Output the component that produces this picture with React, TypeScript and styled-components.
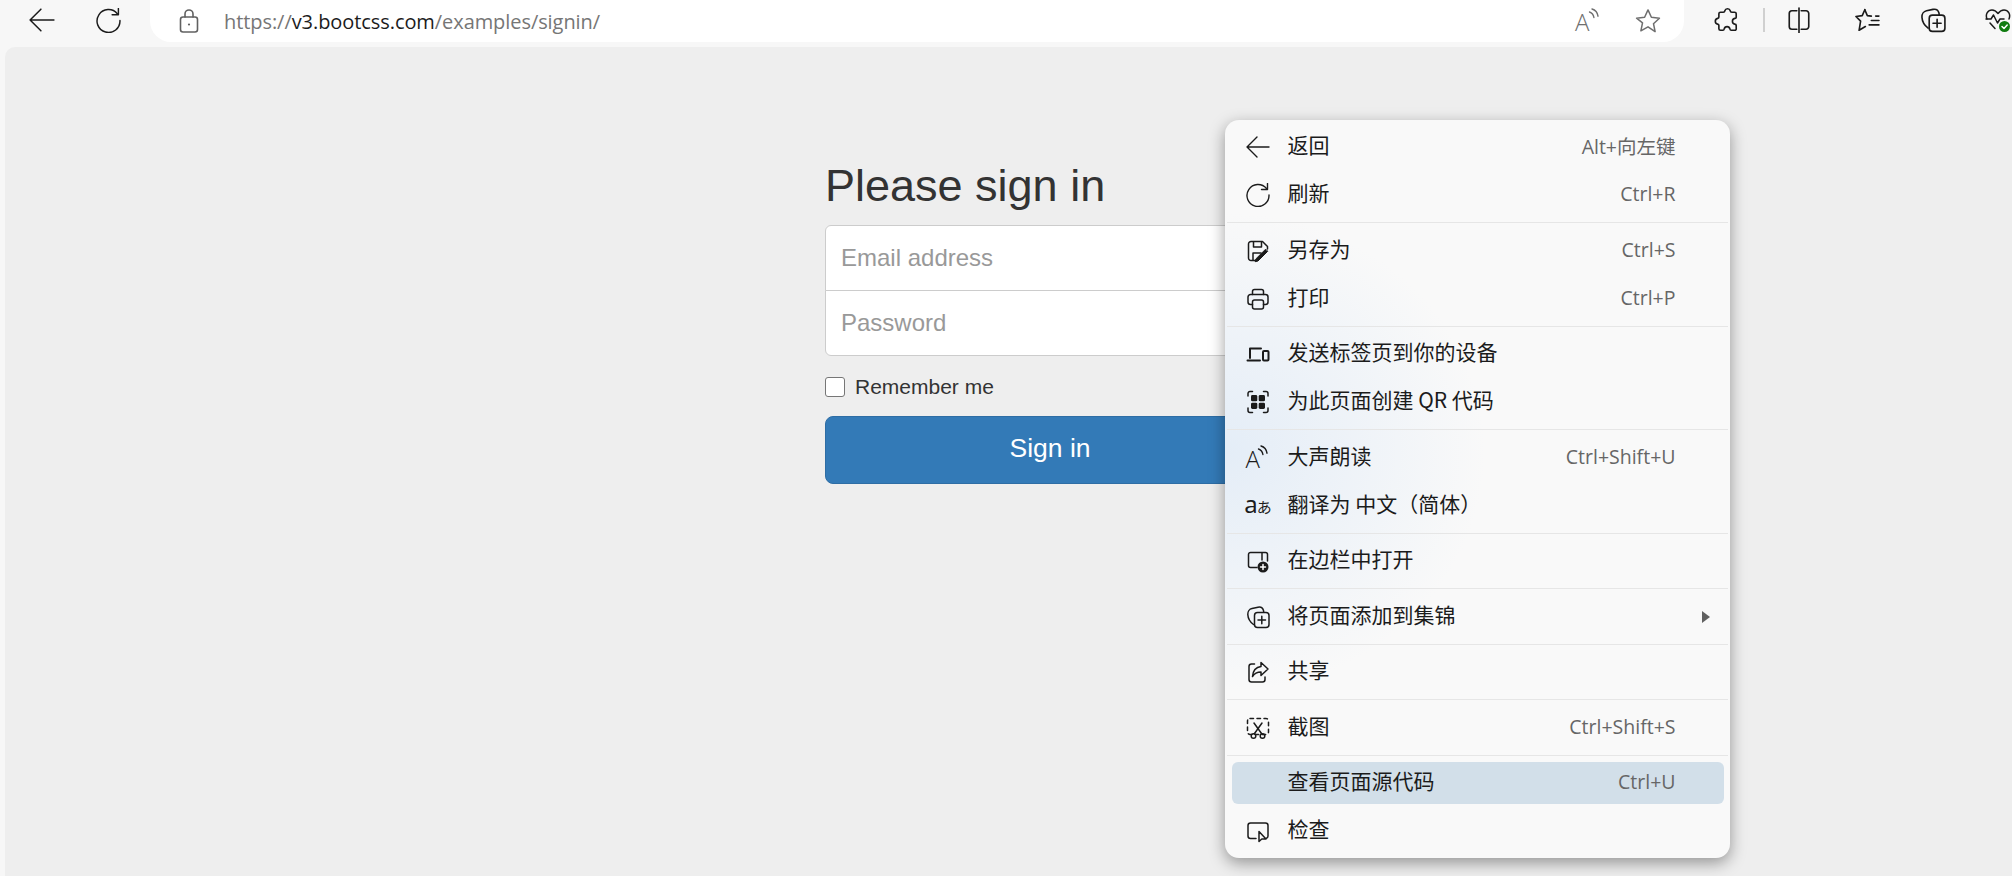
import { FC, ReactNode } from "react";
import styled, { createGlobalStyle } from "styled-components";

const GlobalStyle = createGlobalStyle`
  html, body {
    margin: 0;
    padding: 0;
    height: 876px;
    overflow: hidden;
    background: #f7f7f7;
  }
  * {
    box-sizing: border-box;
  }
`;

const Page = styled.div`
  position: relative;
  display: flex;
  flex-direction: column;
  width: 2012px;
  height: 876px;
  overflow: hidden;
  background: #f7f7f7;
`;

const Toolbar = styled.div`
  display: flex;
  align-items: flex-start;
  height: 47px;
  flex: none;
`;

const NavButton = styled.div<{ $width: number; $left?: number }>`
  display: flex;
  align-items: center;
  justify-content: center;
  flex: none;
  width: ${(p) => p.$width}px;
  height: 40px;
  margin-left: ${(p) => p.$left ?? 0}px;
`;

const AddressBar = styled.div`
  display: flex;
  align-items: center;
  flex: none;
  width: 1534px;
  height: 42px;
  margin-left: 17px;
  padding: 0 22px 0 27px;
  background: #ffffff;
  border-radius: 0 0 21px 21px;
`;

const Url = styled.div`
  flex: 1;
  margin-left: 23px;
  font-family: "Open Sans", "Liberation Sans", sans-serif;
  font-size: 20px;
  letter-spacing: -0.07px;
  color: #767676;
`;

const UrlHost = styled.span`
  color: #1c1c1c;
`;

const BarIcons = styled.div`
  display: flex;
  align-items: center;
  gap: 33px;
`;

const ToolbarDivider = styled.div`
  flex: none;
  width: 2px;
  height: 24px;
  margin: 8px 0 0 23px;
  background: #d0d0d0;
`;

const Content = styled.main`
  flex: 1;
  margin-left: 5px;
  padding: 114px 0 0 820px;
  background: #eeeeee;
  border-radius: 10px 0 0 0;
`;

const SignInForm = styled.form`
  width: 450px;
  font-family: "Liberation Sans", Arial, sans-serif;
  color: #333333;
`;

const Heading = styled.h2`
  margin: 0 0 14px;
  font-size: 45px;
  font-weight: 500;
  line-height: 49.5px;
`;

const Field = styled.input<{ $position: "top" | "bottom" }>`
  display: block;
  width: 100%;
  height: 66px;
  padding: 0 15px;
  margin-top: ${(p) => (p.$position === "bottom" ? "-1px" : "0")};
  font-family: inherit;
  font-size: 24px;
  color: #555555;
  background: #ffffff;
  border: 1px solid #cccccc;
  border-radius: ${(p) => (p.$position === "top" ? "6px 6px 0 0" : "0 0 6px 6px")};
  outline: none;
  &::placeholder {
    color: #999999;
    opacity: 1;
  }
`;

const CheckRow = styled.label`
  display: flex;
  align-items: center;
  gap: 10px;
  height: 20px;
  margin: 21px 0 19px;
  font-size: 21px;
`;

const CheckBox = styled.span`
  flex: none;
  width: 20px;
  height: 20px;
  background: #ffffff;
  border: 1.5px solid #767676;
  border-radius: 3px;
`;

const SubmitButton = styled.button`
  display: block;
  width: 100%;
  height: 68px;
  padding: 0 0 2px;
  font-family: inherit;
  font-size: 26.5px;
  color: #ffffff;
  background: #337ab7;
  border: 1px solid #2e6da4;
  border-radius: 8px;
`;

const Menu = styled.div`
  position: absolute;
  top: 120px;
  left: 1225px;
  display: flex;
  flex-direction: column;
  width: 505px;
  height: 738px;
  padding: 3px 0 4px;
  font-family: "Noto Sans CJK SC", "Noto Sans", sans-serif;
  background:
    radial-gradient(ellipse 260px 240px at 0% 45%, #e4edf7 0%, rgba(228, 237, 247, 0) 100%),
    #f9f9f9;
  border-radius: 14px;
  box-shadow: 0 5px 16px rgba(0, 0, 0, 0.38);
`;

const MenuGroup = styled.div`
  display: flex;
  flex-direction: column;
  flex: none;
`;

const Row = styled.div<{ $active?: boolean }>`
  display: flex;
  align-items: center;
  flex: none;
  height: 42px;
  margin: 3px 6.5px;
  padding: 0 14px;
  background: ${(p) => (p.$active ? "#d2dfe9" : "transparent")};
  border-radius: 6px;
`;

const IconSlot = styled.span`
  display: flex;
  align-items: center;
  justify-content: center;
  flex: none;
  width: 24px;
  height: 24px;
  margin-right: 18px;
`;

const Label = styled.span`
  flex: 1;
  margin-bottom: 6px;
  font-size: 21px;
  font-weight: 400;
  line-height: 36px;
  color: #1b1b1b;
  white-space: pre;
`;

const Shortcut = styled.span`
  margin-right: 34px;
  padding-bottom: 3px;
  font-family: "Open Sans", "Noto Sans CJK SC", sans-serif;
  font-size: 19.5px;
  color: #666666;
`;

const Separator = styled.div`
  flex: none;
  height: 1px;
  margin: 3.25px 2px;
  background: #e6e6e6;
`;

const Svg: FC<{ size?: number; children: ReactNode; color?: string; sw?: number }> = ({
  size = 24,
  children,
  color = "#1b1b1b",
  sw = 1.5,
}) => (
  <svg
    width={size}
    height={size}
    viewBox="0 0 24 24"
    fill="none"
    stroke={color}
    strokeWidth={sw}
    strokeLinecap="round"
    strokeLinejoin="round"
  >
    {children}
  </svg>
);

const BackIcon = ({ size = 24 }: { size?: number }) => (
  <Svg size={size} sw={1.4}>
    <path d="M23 12H1M11 2 1 12l10 10" />
  </Svg>
);

const ReloadIcon = ({ size = 24 }: { size?: number }) => (
  <Svg size={size} sw={1.4}>
    <path d="M20.500 5.500A11 11 0 1 0 23 12" />
    <path d="M21.500 0.500v6h-6" />
  </Svg>
);

const LockIcon = () => (
  <Svg size={24} color="#616161" sw={1.6}>
    <rect x="3.500" y="8" width="17" height="15" rx="2.500" />
    <path d="M8 8V5a4 4 0 0 1 8 0v3" />
    <circle cx="12" cy="15.500" r="1.100" fill="#616161" stroke="none" />
  </Svg>
);

const ReadAloudBox = styled.span<{ $color: string }>`
  position: relative;
  display: block;
  width: 26px;
  height: 26px;
  font-family: "Open Sans", "Liberation Sans", sans-serif;
  font-size: 24px;
  font-weight: 300;
  line-height: 28px;
  color: ${(p) => p.$color};
`;

const ReadWaves = styled.svg`
  position: absolute;
  top: 0;
  right: 0;
`;

const ReadAloudIcon = ({ color = "#1b1b1b" }: { color?: string }) => (
  <ReadAloudBox $color={color}>
    A
    <ReadWaves width="14" height="14" viewBox="0 0 14 14" fill="none" stroke={color} strokeWidth="1.4" strokeLinecap="round">
      <path d="M2.500 4c2.500.8 4 2.800 4.400 5.500" />
      <path d="M5 1c3.500 1 5.500 3.800 6 7.200" />
    </ReadWaves>
  </ReadAloudBox>
);

const StarIcon = () => (
  <Svg size={28} color="#6f6f6f" sw={1.3}>
    <path d="M12 2.500l2.900 6.300 6.900.8-5.100 4.700 1.400 6.800L12 17l-6.100 3.400 1.400-6.800L2.200 9.600l6.900-.8z" />
  </Svg>
);

const ExtensionIcon = () => (
  <Svg size={26} sw={1.5}>
    <path d="M10 3.500a2.600 2.600 0 0 1 5 0c.1.900.600 1.300 1.500 1.300H19a1.500 1.500 0 0 1 1.500 1.500v3c0 .900-.500 1.300-1.300 1.200a2.700 2.700 0 0 0 0 5.300c.800 0 1.300.400 1.300 1.200v2.500A1.500 1.500 0 0 1 19 21.500h-3c-.900 0-1.200-.500-1.300-1.200a2.700 2.700 0 0 0-5.300 0c-.100.800-.500 1.200-1.200 1.200H6a1.500 1.500 0 0 1-1.500-1.500v-3c0-.700-.400-1.100-1.100-1.200a2.700 2.700 0 0 1 0-5.300c.700-.100 1.100-.500 1.100-1.200V6.300A1.500 1.500 0 0 1 6 4.800h2.500c.900 0 1.400-.400 1.500-1.300z" />
  </Svg>
);

const SplitIcon = () => (
  <Svg size={26} sw={1.5}>
    <path d="M10 3.500H5.500A2.500 2.500 0 0 0 3 6v12a2.500 2.500 0 0 0 2.500 2.500H10" />
    <path d="M14 3.500h4.500A2.500 2.500 0 0 1 21 6v12a2.500 2.500 0 0 1-2.500 2.500H14" />
    <path d="M12 1v23" />
  </Svg>
);

const FavoritesIcon = () => (
  <Svg size={26} sw={1.5}>
    <path d="M10 2.500l2.300 5.500 3.700.4M20 8.400h3M16 12.500h7M14 16.500h9" />
    <path d="M10 2.500 7.600 8 1.800 8.800l4.300 4.300-1.400 8.400 5.800-3.500" />
  </Svg>
);

const CollectionsIcon = ({ size = 26 }: { size?: number }) => (
  <Svg size={size} sw={1.5}>
    <path d="M7.500 19.500C4 17 2 13 1.800 9.500 1.600 6.500 3.500 4 6 3.500l6-1.300c2.500-.500 4.800.800 5.500 3.300l.2 1.500" />
    <rect x="8.500" y="7.500" width="14.500" height="15" rx="3" />
    <path d="M15.800 11.300v7.500M12 15h7.500" />
  </Svg>
);

const HealthIcon = () => (
  <svg width="26" height="26" viewBox="0 0 26 26" fill="none" stroke="#1b1b1b" strokeWidth="1.5" strokeLinejoin="round" strokeLinecap="round">
    <path d="M2 12 C0 7 3 3 7 3c2.500 0 4.500 1.500 6 3.500C14.500 4.500 16.500 3 19 3c4 0 7 4 5 9" />
    <path d="M1 12h5l2.500-4 4 8 2.500-4h4M5 16l5 5.500" />
    <circle cx="19.500" cy="19.500" r="5.500" fill="#107c10" stroke="none" />
    <path d="M17 19.500l2 2 3.200-3.500" stroke="#ffffff" strokeWidth="1.500" />
  </svg>
);

const SaveIcon = () => (
  <Svg sw={1.5}>
    <path d="M10 21.500H5A2.500 2.500 0 0 1 2.500 19V5A2.500 2.500 0 0 1 5 2.500h11.500L21.500 7.500V10" />
    <path d="M7.500 3v5h8V3M7 21v-7h8" />
    <path d="M21.500 12.500 12 22l-2.800.7.700-2.800 9.500-9.500z" fill="#1b1b1b" strokeWidth="1" />
  </Svg>
);

const PrintIcon = () => (
  <Svg sw={1.5}>
    <path d="M6.500 7.500V4.500a2 2 0 0 1 2-2h7a2 2 0 0 1 2 2v3" />
    <path d="M6.500 17.500H4.500a2.500 2.500 0 0 1-2.500-2.500v-5a2.500 2.500 0 0 1 2.500-2.500h15a2.500 2.500 0 0 1 2.500 2.500v5a2.500 2.500 0 0 1-2.500 2.500h-2" />
    <rect x="6.500" y="13" width="11" height="9" rx="2" />
  </Svg>
);

const DevicesIcon = () => (
  <Svg sw={1.7}>
    <path d="M4 16V6.500h11M1.500 18.500H14" strokeWidth="2" />
    <rect x="17" y="9" width="5.500" height="9.500" rx="1" strokeWidth="2" />
  </Svg>
);

const QrIcon = () => (
  <Svg sw={1.5}>
    <path d="M2 6V3.500a2 2 0 0 1 2-2h2.500M17.500 1.500H20a2 2 0 0 1 2 2V6M22 18v2.500a2 2 0 0 1-2 2h-2.500M6.500 22.500H4a2 2 0 0 1-2-2V18" />
    <g fill="#1b1b1b" stroke="none">
      <rect x="5" y="5" width="6.300" height="6.300" rx="1.400" />
      <rect x="12.700" y="5" width="6.300" height="6.300" rx="1.400" />
      <rect x="5" y="12.700" width="6.300" height="6.300" rx="1.400" />
      <rect x="12.700" y="12.700" width="6.300" height="6.300" rx="1.400" />
    </g>
  </Svg>
);

const TranslateText = styled.span`
  font-family: "Noto Sans", "Noto Sans CJK JP", sans-serif;
  font-size: 24px;
  line-height: 24px;
  letter-spacing: -1px;
  color: #1b1b1b;
  white-space: nowrap;
`;

const SmallKana = styled.span`
  font-family: "Noto Sans CJK JP", sans-serif;
  font-size: 15px;
`;

const SidebarIcon = () => (
  <Svg sw={1.5}>
    <path d="M11 18.500H4.500a2 2 0 0 1-2-2v-11a2 2 0 0 1 2-2h15a2 2 0 0 1 2 2V12" />
    <path d="M16 4v7" />
    <circle cx="17" cy="18" r="5.500" fill="#1b1b1b" stroke="none" />
    <path d="M17 15.500v5M14.500 18h5" stroke="#ffffff" strokeWidth="1.500" />
  </Svg>
);

const ShareIcon = () => (
  <Svg sw={1.5}>
    <path d="M8.500 4H5.500A2.500 2.500 0 0 0 3 6.500v13A2.500 2.500 0 0 0 5.500 22h11a2.500 2.500 0 0 0 2.500-2.500V17" />
    <path d="M15 2.500 22 9l-7 6.500V12c-4 0-6.500 1.200-8.500 4.500C7 10.500 10.500 7 15 6.500z" />
  </Svg>
);

const ScreenshotIcon = () => (
  <Svg sw={1.5}>
    <rect x="1.500" y="2.500" width="21" height="16" rx="2.500" strokeDasharray="3.500 3.500" />
    <path d="M8 7l7.500 10.500M16 7 8.500 17.500" />
    <circle cx="7.500" cy="20" r="2.300" />
    <circle cx="16.500" cy="20" r="2.300" />
  </Svg>
);

const InspectIcon = () => (
  <Svg sw={1.5}>
    <path d="M10 19.500H4.500a2.500 2.500 0 0 1-2.500-2.500V6.500A2.500 2.500 0 0 1 4.500 4h15A2.500 2.500 0 0 1 22 6.500V17a2.500 2.500 0 0 1-1.500 2.300" />
    <path d="M13 12.500v10l2.800-2.500h4.200z" fill="#f9f9f9" />
  </Svg>
);

const SubmenuArrow = styled.span`
  flex: none;
  width: 0;
  height: 0;
  border-left: 8px solid #606060;
  border-top: 6px solid transparent;
  border-bottom: 6px solid transparent;
`;

interface IMenuItem {
  icon?: ReactNode;
  label: string;
  shortcut?: string;
  arrow?: boolean;
  active?: boolean;
}

const menuGroups: IMenuItem[][] = [
  [
    { icon: <BackIcon />, label: "返回", shortcut: "Alt+向左键" },
    { icon: <ReloadIcon />, label: "刷新", shortcut: "Ctrl+R" },
  ],
  [
    { icon: <SaveIcon />, label: "另存为", shortcut: "Ctrl+S" },
    { icon: <PrintIcon />, label: "打印", shortcut: "Ctrl+P" },
  ],
  [
    { icon: <DevicesIcon />, label: "发送标签页到你的设备" },
    { icon: <QrIcon />, label: "为此页面创建 QR 代码" },
  ],
  [
    { icon: <ReadAloudIcon />, label: "大声朗读", shortcut: "Ctrl+Shift+U" },
    {
      icon: (
        <TranslateText>
          a<SmallKana>あ</SmallKana>
        </TranslateText>
      ),
      label: "翻译为 中文（简体）",
    },
  ],
  [{ icon: <SidebarIcon />, label: "在边栏中打开" }],
  [{ icon: <CollectionsIcon size={24} />, label: "将页面添加到集锦", arrow: true }],
  [{ icon: <ShareIcon />, label: "共享" }],
  [{ icon: <ScreenshotIcon />, label: "截图", shortcut: "Ctrl+Shift+S" }],
  [
    { label: "查看页面源代码", shortcut: "Ctrl+U", active: true },
    { icon: <InspectIcon />, label: "检查" },
  ],
];

const App: FC = () => {
  return (
    <Page>
      <GlobalStyle />
      <Toolbar>
        <NavButton $width={83}>
          <BackIcon size={26} />
        </NavButton>
        <NavButton $width={50}>
          <ReloadIcon size={25} />
        </NavButton>
        <AddressBar>
          <LockIcon />
          <Url>
            https://<UrlHost>v3.bootcss.com</UrlHost>/examples/signin/
          </Url>
          <BarIcons>
            <ReadAloudIcon color="#6f6f6f" />
            <StarIcon />
          </BarIcons>
        </AddressBar>
        <NavButton $width={26} $left={30}>
          <ExtensionIcon />
        </NavButton>
        <ToolbarDivider />
        <NavButton $width={26} $left={21}>
          <SplitIcon />
        </NavButton>
        <NavButton $width={26} $left={42}>
          <FavoritesIcon />
        </NavButton>
        <NavButton $width={26} $left={40}>
          <CollectionsIcon />
        </NavButton>
        <NavButton $width={26} $left={39}>
          <HealthIcon />
        </NavButton>
      </Toolbar>
      <Content>
        <SignInForm onSubmit={(e) => e.preventDefault()}>
          <Heading>Please sign in</Heading>
          <Field $position="top" placeholder="Email address" />
          <Field $position="bottom" placeholder="Password" />
          <CheckRow>
            <CheckBox />
            Remember me
          </CheckRow>
          <SubmitButton type="submit">Sign in</SubmitButton>
        </SignInForm>
      </Content>
      <Menu>
        {menuGroups.map((group, index) => (
          <MenuGroup key={index}>
            {index > 0 && <Separator />}
            {group.map((item) => (
              <Row key={item.label} $active={item.active}>
                <IconSlot>{item.icon}</IconSlot>
                <Label>{item.label}</Label>
                {item.shortcut && <Shortcut>{item.shortcut}</Shortcut>}
                {item.arrow && <SubmenuArrow />}
              </Row>
            ))}
          </MenuGroup>
        ))}
      </Menu>
    </Page>
  );
};

export default App;
